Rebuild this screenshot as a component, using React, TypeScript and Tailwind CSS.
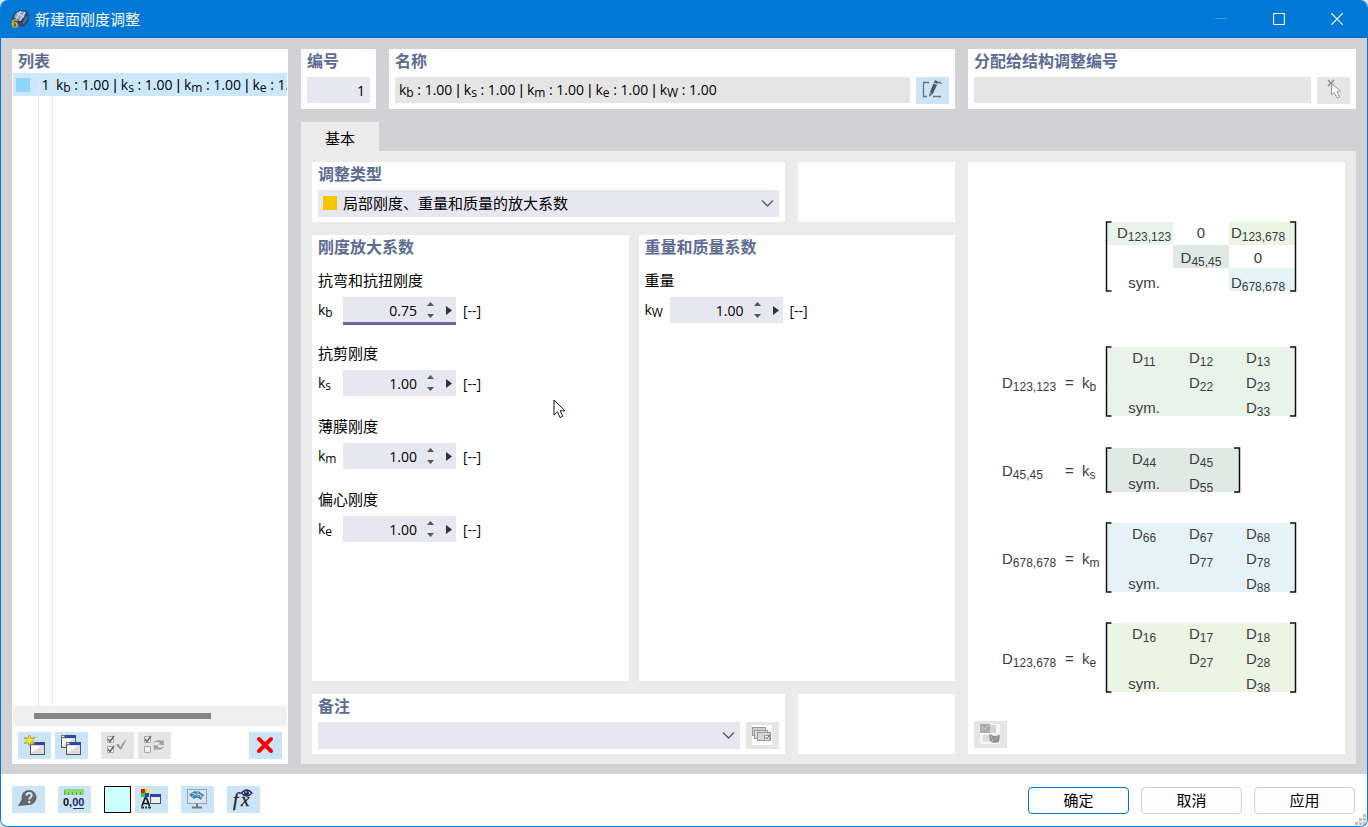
import clsx from "clsx";
import { FC, ReactNode, useState } from "react";

const Symbol: FC<{ sub: string }> = ({ sub }) => (
	<>
		k<sub className="-bottom-0.5 text-[12px]">{sub}</sub>
	</>
);

const FACTORS = ["b", "s", "m", "e", "W"];

const FactorSummary = () => (
	<>
		{FACTORS.map((sub, i) => (
			<span key={sub}>
				{i > 0 && <span className="font-['Liberation_Sans',sans-serif]"> | </span>}
				<Symbol sub={sub} /> : 1.00
			</span>
		))}
	</>
);

const Panel: FC<{
	title?: string;
	className?: string;
	children?: ReactNode;
}> = ({ title, className, children }) => (
	<section className={clsx("bg-white min-w-0", className)}>
		{title && (
			<h2 className="h-6 pl-1.5 text-[16px] leading-6 font-bold text-[#5d6b93]">
				{title}
			</h2>
		)}
		{children}
	</section>
);

const IconButton: FC<{
	label: string;
	disabled?: boolean;
	className?: string;
	children: ReactNode;
}> = ({ label, disabled, className, children }) => (
	<button
		type="button"
		aria-label={label}
		disabled={disabled}
		className={clsx(
			"flex h-[27px] w-[33px] shrink-0 items-center justify-center",
			disabled ? "bg-[#e5e5e5]" : "bg-[#cce4f7] hover:bg-[#b8daf5]",
			className
		)}
	>
		<svg className="overflow-visible" width="21" height="21" viewBox="1 1 21 21" fill="none">
			{children}
		</svg>
	</button>
);

/* ---------- icon drawings ---------- */

const AppIcon = () => (
	<svg className="overflow-visible" width="20" height="20" viewBox="0 0 20 20" fill="none">
		<path d="M2 9 Q4 3 10 1 L17 2 L19 6 L18 13 L13 18 L9 17 L4 12z" fill="#324463" />
		<path d="M4 8 Q6 3 10 2 L16 3 L14 8 L10 12 L6 10z" fill="#8fa6cf" />
		<path d="M7 4 L14 8 M11 2 L6 10 M15 3 L10 12" stroke="#dbe5f7" strokeWidth="1" />
		<path d="M15 8 L18 7 L16 13 L12 16z" fill="#56688c" />
		<text
			x="1"
			y="19"
			fontSize="13"
			fontWeight="700"
			fill="#f3bd2c"
			stroke="#5f4d20"
			strokeWidth="0.3"
			className="font-['Liberation_Sans',sans-serif]"
		>
			6
		</text>
	</svg>
);

const SmallWindow: FC<{ x: number; y: number }> = ({ x, y }) => (
	<g transform={`translate(${x} ${y})`}>
		<rect x="0.5" y="0.5" width="14" height="12" fill="#dcdcdc" stroke="#555" />
		<rect x="0" y="0" width="15" height="3" fill="#3246a8" />
		<rect x="0" y="0" width="4" height="3" fill="#777" />
		<rect x="1" y="1" width="2" height="1" fill="#dfe4ff" />
		<path d="M1 11 V4 H12z" fill="#f8f8f8" />
	</g>
);

const NewIcon = () => (
	<>
		<SmallWindow x={7} y={8} />
		<path
			d="M6.500 1 L7.800 4.500 L12 3.500 L9 6.500 L12 9.500 L7.800 8.700 L6.500 12 L5 8.700 L1 9.500 L4 6.500 L1 3.500 L5 4.500z"
			fill="#ffee22"
			stroke="#8d8615"
			strokeWidth="0.7"
		/>
	</>
);

const CopyIcon = () => (
	<>
		<SmallWindow x={1} y={1} />
		<SmallWindow x={6} y={8} />
	</>
);

const CheckAllIcon = () => (
	<>
		<path d="M1.500 2.500h6v6h-6z M1.500 12.500h6v6h-6z" fill="#f4f4f4" stroke="#aaa" />
		<path d="M2 5 L4 7.500 L8 2 M2 15 L4 17.500 L8 12" stroke="#666" strokeWidth="1.500" />
		<path d="M10 11 L12.500 9.500 L14.500 13 Q16.500 8 21 5 Q18 10 15 16z" fill="#999" />
	</>
);

const ToggleIcon = () => (
	<>
		<path d="M1.500 2.500h6v6h-6z M1.500 12.500h6v6h-6z" fill="#f0f0f0" stroke="#aaa" />
		<path d="M2 5 L4 7.500 L8 2" stroke="#666" strokeWidth="1.500" />
		<path
			d="M10 9.500 Q14 4 19 7 L20.500 5.500 L21 11 L15.500 10.500 L17 9 Q14 7 10 9.500z"
			fill="#a0a0a0"
		/>
		<path
			d="M21 12.500 Q18 17.500 13 15 L11 17 L10.500 11 L16 11.500 L14.500 13 Q18 14.500 21 12.500z"
			fill="#a0a0a0"
		/>
	</>
);

const HelpIcon = () => (
	<>
		<circle cx="12" cy="9.500" r="7.500" fill="#666" />
		<path d="M5 11 L1 18 L12 17z" fill="#666" />
		<path
			d="M9.500 7.800 Q9.500 5 12 5 Q14.700 5 14.700 7.400 Q14.700 8.800 13.200 9.600 Q12.200 10.200 12.200 11.500"
			stroke="#d6e9f8"
			strokeWidth="2"
		/>
		<circle cx="12.200" cy="14" r="1.200" fill="#d6e9f8" />
	</>
);

const DecimalsIcon = () => (
	<>
		<rect x="1" y="1" width="20" height="6" fill="#92d878" />
		<path d="M1.500 3v4 M5.500 4v3 M9.500 4v3 M13.500 4v3 M17.500 4v3" stroke="#67a552" />
		<text
			x="0"
			y="18"
			fontSize="11"
			fontWeight="700"
			fill="#111"
			className="font-['Liberation_Sans',sans-serif]"
		>
			0,<tspan fill="#1c2c66">00</tspan>
		</text>
		<path d="M10 20.500h11" stroke="#26336b" />
	</>
);

const DisplayIcon = () => (
	<>
		<path d="M1 1h4v4H1z" fill="#f00" />
		<path d="M5 1h4v4H5z" fill="#ffe600" />
		<path d="M1 5h4v4H1z" fill="#1fd81f" />
		<path d="M5 5h4v4H5z" fill="#203df0" />
		<path d="M2 18 L5 10 H6.500 L9.500 18 M3.500 15.500h4.500" stroke="#111" strokeWidth="1.600" />
		<path d="M1 19.500h3 M5 19.500h2 M8 19.500h3" stroke="#333" strokeWidth="2" />
		<rect x="10.500" y="6.500" width="10" height="9" fill="#eee" stroke="#555" />
		<rect x="10" y="6" width="11" height="3" fill="#3246a8" />
	</>
);

const ModelViewIcon = () => (
	<>
		<rect x="1.500" y="1.500" width="19" height="14" fill="#d8e6f2" stroke="#98a3ae" />
		<path d="M11 16v3 M6 19.500h10" stroke="#777" strokeWidth="2" />
		<path d="M3 7 Q8 1.500 13 3.500 L18 7 L15 12 Q11 8 8 11 Z" fill="#3f81ba" />
		<path d="M6 5 Q10 5 12.500 9 M10 3 Q13 5 16 10.500 M5.500 9 Q11 3 17 9" stroke="#a9d0ee" />
	</>
);

const FormulaIcon = () => (
	<>
		<text
			x="1"
			y="18"
			fontSize="19"
			fontStyle="italic"
			fill="#222"
			stroke="#222"
			strokeWidth="0.3"
			className="font-['Liberation_Serif',serif]"
		>
			f<tspan x="9">x</tspan>
		</text>
		<path d="M9.500 5 Q14.500 -1 20 5 Q14.500 11 9.500 5z" fill="#e8eaff" stroke="#28255f" strokeWidth="1.300" />
		<circle cx="14.500" cy="5" r="2.500" fill="#28255f" />
		<circle cx="14" cy="4" r="0.800" fill="#fff" />
	</>
);

const EditIcon = () => (
	<>
		<path d="M8 3.500H2.500v14H6 M17 3.500h3 M12 17.500h8 M20 4v1 M2.500 3v15" stroke="#707070" strokeWidth="1.300" />
		<path d="M9 13 L12.500 4.500 L16 6 L12 14.500 L8 18z" fill="#555" />
		<path d="M13 3.500 L14 1 L17 2.500 L16.500 5z" fill="#555" />
		<path d="M9 13 L8.500 16 L11 14.500z" fill="#999" />
	</>
);

const PickIcon = () => (
	<>
		<path d="M6 1 L12 7 M12 1 L6 7" stroke="#888" strokeWidth="1.300" />
		<path
			d="M9.500 4.500 L9.500 16 L12 13.500 L15 19 L17.500 18 L15 12.500 L18.500 12z"
			fill="#fff"
			stroke="#999"
		/>
	</>
);

const CommentLibraryIcon = () => (
	<>
		<rect x="1" y="1" width="20" height="20" fill="#fff" />
		<rect x="1.500" y="3.500" width="13" height="8" fill="#ccc" stroke="#999" />
		<rect x="3.500" y="6.500" width="13" height="8" fill="#ddd" stroke="#999" />
		<rect x="6.500" y="8.500" width="13" height="8" fill="#d5d5d5" stroke="#999" />
		<path d="M13.500 11.500h5v5h-5z" fill="#eee" stroke="#999" />
		<path d="M14.500 13 L16 15 L19 10" stroke="#777" />
	</>
);

const PictureIcon = () => (
	<>
		<rect x="1" y="1" width="20" height="20" fill="#f6f6f6" />
		<rect x="1" y="1" width="10" height="9" fill="#aaa" />
		<path d="M2 3 L6 6 L10 2 M2 8 L5 5 L10 9" stroke="#c8c8c8" />
		<path d="M11 2h6v8h-6z" fill="#d4d4d4" />
		<path d="M4 12h7v7H4z" fill="#dedede" />
		<path d="M10 11 L15 13 L21 12 L20 19 L15 20 L11 18z" fill="#8e8e8e" />
		<path d="M12 13 L14 18 L19 13.500" stroke="#bbb" />
	</>
);

const Chevron = () => (
	<svg
		className="pointer-events-none absolute top-2 right-[5px]"
		width="13"
		height="11"
		viewBox="0 0 13 11"
		fill="none"
	>
		<path d="M1 2.500 L6.500 8 L12 2.500" stroke="#5c5c5c" strokeWidth="1.400" />
	</svg>
);

/* ---------- factor input ---------- */

const FactorField: FC<{
	title: string;
	sub: string;
	initial: string;
	active?: boolean;
}> = ({ title, sub, initial, active }) => {
	const [value, setValue] = useState(initial);
	const step = (delta: number) => setValue((Number(value) + delta).toFixed(2));
	const id = `factor-${sub}`;

	return (
		<div className="flex flex-col gap-[7px]">
			<div className="h-5 text-[15px] leading-5">{title}</div>
			<div className="flex h-[26px] items-center text-[14px]">
				<label htmlFor={id} className="w-[25px] leading-5">
					<Symbol sub={sub} />
				</label>
				<div
					className={clsx(
						"flex h-full w-[113px] items-center bg-[#e7e7f1]",
						active && "shadow-[0_2px_0_#6764a7,inset_0_-1px_0_#6764a7]"
					)}
				>
					<input
						id={id}
						aria-label={title}
						className="h-full w-[74px] bg-transparent text-right outline-none"
						value={value}
						onChange={(e) => setValue(e.target.value)}
					/>
					<div className="ml-[10px] flex h-full w-2 flex-col justify-center gap-2">
						<button type="button" aria-label="增加" onClick={() => step(0.01)}>
							<svg width="7" height="4" viewBox="0 0 7 4">
								<path d="M3.500 0 L7 4 H0z" fill="#555" />
							</svg>
						</button>
						<button type="button" aria-label="减少" onClick={() => step(-0.01)}>
							<svg width="7" height="4" viewBox="0 0 7 4">
								<path d="M3.500 4 L7 0 H0z" fill="#555" />
							</svg>
						</button>
					</div>
					<button type="button" aria-label="更多" className="ml-[11px]">
						<svg width="6" height="9" viewBox="0 0 6 9">
							<path d="M0 0 L6 4.500 L0 9z" fill="#333" />
						</svg>
					</button>
				</div>
				<span className="ml-[7px]">[--]</span>
			</div>
		</div>
	);
};

/* ---------- stiffness matrix diagram ---------- */

const COLS = [176, 233, 290];

const Term: FC<{ x: number; y: number; base: string; sub?: string; start?: boolean }> = ({
	x,
	y,
	base,
	sub,
	start,
}) => (
	<text x={x} y={y} textAnchor={start ? "start" : "middle"} fontSize="15" fill="#3c3c3c">
		{base}
		{sub && (
			<tspan dy="3" fontSize="12">
				{sub}
			</tspan>
		)}
	</text>
);

const Brackets: FC<{ top: number; right: number; height: number }> = ({ top, right, height }) => (
	<path
		d={`M143.500 ${top}H138.500V${top + height}H143.500 M${right - 6} ${top}H${right - 0.5}V${top + height}H${right - 6}`}
		stroke="#111"
		strokeWidth="1.500"
		fill="none"
	/>
);

// rows hold the index pairs of D, "sym" marks the symmetric lower part
const BLOCKS = [
	{ name: "123,123", k: "b", top: 185, fill: "#e8f4e9", rows: [["11", "12", "13"], ["", "22", "23"], ["sym", "", "33"]] },
	{ name: "45,45", k: "s", top: 286, fill: "#e0eae5", rows: [["44", "45"], ["sym", "55"]] },
	{ name: "678,678", k: "m", top: 361, fill: "#e5f3f9", rows: [["66", "67", "68"], ["", "77", "78"], ["sym", "", "88"]] },
	{ name: "123,678", k: "e", top: 461, fill: "#eaf5e4", rows: [["16", "17", "18"], ["", "27", "28"], ["sym", "", "38"]] },
];

const MatrixDiagram = () => (
	<svg
		className="min-h-0 w-full flex-1 font-['Liberation_Sans',Arial,sans-serif]"
		viewBox="0 0 377 559"
		role="img"
		aria-label="刚度矩阵"
	>
		<rect x="139" y="60" width="66" height="23" fill="#e8f4e9" />
		<rect x="261" y="60" width="66" height="23" fill="#eaf5e4" />
		<rect x="205" y="83" width="56" height="23" fill="#e0eae5" />
		<rect x="261" y="106" width="66" height="23" fill="#e5f3f9" />
		<Brackets top={60} right={328} height={69} />
		<Term x={COLS[0]} y={76} base="D" sub="123,123" />
		<Term x={COLS[1]} y={76} base="0" />
		<Term x={COLS[2]} y={76} base="D" sub="123,678" />
		<Term x={COLS[1]} y={101} base="D" sub="45,45" />
		<Term x={COLS[2]} y={101} base="0" />
		<Term x={COLS[0]} y={126} base="sym." />
		<Term x={COLS[2]} y={126} base="D" sub="678,678" />

		{BLOCKS.map(({ name, k, top, fill, rows }) => {
			const right = rows.length === 3 ? 328 : 272;
			const height = rows.length === 3 ? 69 : 44;
			const labelY = rows.length === 3 ? top + 41 : top + 28;
			return (
				<g key={name}>
					<rect x="139" y={top} width={right - 140} height={height} fill={fill} />
					<Brackets top={top} right={right} height={height} />
					<Term x={34} y={labelY} base="D" sub={name} start />
					<Term x={97} y={labelY} base="=" start />
					<Term x={114} y={labelY} base="k" sub={k} start />
					{rows.map((row, r) =>
						row.map((cell, c) =>
							cell === "sym" ? (
								<Term key={c} x={COLS[c]} y={top + 16 + r * 25} base="sym." />
							) : (
								cell && <Term key={c} x={COLS[c]} y={top + 16 + r * 25} base="D" sub={cell} />
							)
						)
					)}
				</g>
			);
		})}
	</svg>
);

/* ---------- window parts ---------- */

const TitleBar = () => (
	<header className="flex h-[38px] shrink-0 items-center bg-[#0078d7] pr-px pl-[9px] text-white">
		<AppIcon />
		<h1 className="ml-[5px] flex-1 text-[15px]">新建面刚度调整</h1>
		<button type="button" aria-label="最小化" disabled className="flex h-full w-[58px] items-center justify-center">
			<svg width="12" height="12" viewBox="0 0 12 12">
				<path d="M0 5.500h12" stroke="#3c97e0" />
			</svg>
		</button>
		<button type="button" aria-label="最大化" className="flex h-full w-[58px] items-center justify-center">
			<svg width="12" height="12" viewBox="0 0 12 12" fill="none">
				<rect x="0.500" y="0.500" width="11" height="11" rx="1" stroke="#fff" strokeWidth="1.200" />
			</svg>
		</button>
		<button type="button" aria-label="关闭" className="flex h-full w-[58px] items-center justify-center">
			<svg width="12" height="12" viewBox="0 0 12 12">
				<path d="M0 0 L12 12 M12 0 L0 12" stroke="#fff" strokeWidth="1.200" />
			</svg>
		</button>
	</header>
);

const ListPanel = () => (
	<Panel title="列表" className="flex w-[276px] shrink-0 flex-col">
		<div className="mx-px min-h-0 flex-1 overflow-hidden">
			<table className="h-full w-full table-fixed border-separate border-spacing-0 text-[14px]">
				<colgroup>
					<col className="w-[26px]" />
					<col className="w-[14px]" />
					<col />
				</colgroup>
				<tbody>
					<tr className="h-[23px] bg-[#cce8ff]">
						<td className="border-r border-[#e5e5e5] p-0 pl-[3px]">
							<div className="h-3.5 w-3.5 bg-[#8fd6f4]" />
						</td>
						<td className="border-r border-[#e5e5e5] p-0 text-center leading-5">1</td>
						<td className="overflow-hidden p-0 pl-[3px] leading-5 whitespace-nowrap">
							<FactorSummary />
						</td>
					</tr>
					<tr>
						<td className="border-r border-[#ebebeb]" />
						<td className="border-r border-[#ebebeb]" />
						<td />
					</tr>
				</tbody>
			</table>
		</div>
		<div className="mx-px flex h-5 items-center bg-[#f0f0f0] pl-[21px]">
			<div className="h-1.5 w-[177px] bg-[#868686]" />
		</div>
		<div className="flex gap-1 px-1.5 pt-1.5 pb-[5px]">
			<IconButton label="新建">
				<NewIcon />
			</IconButton>
			<IconButton label="复制">
				<CopyIcon />
			</IconButton>
			<IconButton label="全选" disabled className="ml-[9px]">
				<CheckAllIcon />
			</IconButton>
			<IconButton label="反选" disabled>
				<ToggleIcon />
			</IconButton>
			<IconButton label="删除" className="ml-auto">
				<path d="M5 5 L17 17 M17 5 L5 17" stroke="#f00" strokeWidth="4" strokeLinecap="round" />
			</IconButton>
		</div>
	</Panel>
);

const Footer = () => (
	<footer className="relative flex h-[52px] shrink-0 items-start gap-[13px] bg-white pt-3 pr-[12px] pl-[11px]">
		<IconButton label="帮助">
			<HelpIcon />
		</IconButton>
		<IconButton label="单位和小数位">
			<DecimalsIcon />
		</IconButton>
		<div className="flex gap-1">
			<button type="button" aria-label="颜色" className="h-[27px] w-[27px] border border-black bg-[#ccffff]" />
			<IconButton label="显示属性">
				<DisplayIcon />
			</IconButton>
		</div>
		<IconButton label="模型视图">
			<ModelViewIcon />
		</IconButton>
		<IconButton label="公式">
			<FormulaIcon />
		</IconButton>
		<div className="mt-px ml-auto flex gap-3 text-[15px]">
			<button type="button" className="h-[27px] w-[101px] rounded-[4px] border border-[#0078d4] bg-[#fdfdfd]">
				确定
			</button>
			<button type="button" className="h-[27px] w-[101px] rounded-[4px] border border-[#d0d0d0] bg-[#fdfdfd]">
				取消
			</button>
			<button type="button" className="h-[27px] w-[101px] rounded-[4px] border border-[#d0d0d0] bg-[#fdfdfd]">
				应用
			</button>
		</div>
		<svg className="absolute right-0 bottom-0" width="14" height="14" viewBox="0 0 14 14">
			<path d="M10 2h3v3h-3z M6 6h3v3h-3z M10 6h3v3h-3z M2 10h3v3H2z M6 10h3v3H6z M10 10h3v3h-3z" fill="#bfbfbf" />
		</svg>
	</footer>
);

const App = () => {
	const [comment, setComment] = useState("");

	return (
		<div className="h-screen min-h-[640px] bg-[#dfe5ea] font-['Open_Sans','Noto_Sans_CJK_SC',sans-serif] text-black">
			<div className="flex h-full flex-col overflow-hidden rounded-lg border border-t-0 border-[#0078d4]">
				<TitleBar />
				<main className="flex min-h-0 flex-1 gap-[13px] bg-[#d2d1d6] px-[11px] pt-[11px] pb-[10px]">
					<ListPanel />
					<div className="flex min-w-0 flex-1 flex-col">
						<div className="grid h-[60px] shrink-0 grid-cols-[75fr_566fr_388fr] gap-[13px]">
							<Panel title="编号">
								<input
									aria-label="编号"
									className="mt-1 ml-1.5 block h-[26px] w-[calc(100%-12px)] bg-[#e7e7f1] pr-[5px] text-right text-[14px]"
									defaultValue="1"
								/>
							</Panel>
							<Panel title="名称">
								<div className="mt-1 flex gap-1.5 px-1.5">
									<output
										aria-label="名称"
										className="h-[26px] min-w-0 flex-1 overflow-hidden bg-[#e5e5e5] pl-1 text-[14px] leading-[26px] whitespace-nowrap"
									>
										<FactorSummary />
									</output>
									<IconButton label="编辑名称">
										<EditIcon />
									</IconButton>
								</div>
							</Panel>
							<Panel title="分配给结构调整编号">
								<div className="mt-1 flex gap-1.5 px-1.5">
									<input
										aria-label="分配给结构调整编号"
										disabled
										className="h-[26px] min-w-0 flex-1 bg-[#e5e5e5] px-1 text-[14px]"
									/>
									<IconButton label="选择" disabled>
										<PickIcon />
									</IconButton>
								</div>
							</Panel>
						</div>

						<div role="tablist" className="mt-[13px] flex shrink-0">
							<button
								type="button"
								role="tab"
								aria-selected="true"
								className="h-[29px] w-[78px] bg-[#ebebeb] pt-1 text-[15px]"
							>
								基本
							</button>
						</div>

						<div
							role="tabpanel"
							className="grid min-h-0 flex-1 grid-cols-[643fr_377fr] gap-[13px] bg-[#ebebeb] px-[11px] pt-[11px] pb-[10px]"
						>
							<div className="flex min-h-0 min-w-0 flex-col gap-[13px]">
								<div className="grid h-[60px] shrink-0 grid-cols-[473fr_157fr] gap-[13px]">
									<Panel title="调整类型">
										<div className="relative mx-1.5 mt-1">
											<span className="absolute top-1.5 left-[5px] h-3.5 w-3.5 bg-[#f7c500]" />
											<select
												aria-label="调整类型"
												className="h-[27px] w-full appearance-none bg-[#e7e7f1] pl-[25px] text-[15px]"
											>
												<option>局部刚度、重量和质量的放大系数</option>
											</select>
											<Chevron />
										</div>
									</Panel>
									<Panel />
								</div>

								<div className="grid min-h-0 flex-1 grid-cols-2 gap-[10px]">
									<Panel title="刚度放大系数" className="relative">
										<div className="mt-[11px] flex flex-col gap-5 pl-1.5">
											<FactorField title="抗弯和抗扭刚度" sub="b" initial="0.75" active />
											<FactorField title="抗剪刚度" sub="s" initial="1.00" />
											<FactorField title="薄膜刚度" sub="m" initial="1.00" />
											<FactorField title="偏心刚度" sub="e" initial="1.00" />
										</div>
										{/* mouse pointer */}
										<svg
											className="pointer-events-none absolute top-[164px] left-[241px]"
											width="13"
											height="20"
											viewBox="0 0 13 20"
										>
											<path
												d="M1 1 V16 L4.500 12.700 L7 18.500 L9.700 17.300 L7.200 11.800 H12z"
												fill="#fff"
												stroke="#111827"
											/>
										</svg>
									</Panel>
									<Panel title="重量和质量系数">
										<div className="mt-[11px] pl-1.5">
											<FactorField title="重量" sub="W" initial="1.00" />
										</div>
									</Panel>
								</div>

								<div className="grid h-[60px] shrink-0 grid-cols-[473fr_157fr] gap-[13px]">
									<Panel title="备注">
										<div className="mt-1 flex gap-1.5 px-1.5">
											<div className="relative min-w-0 flex-1">
												<select
													aria-label="备注"
													className="h-[27px] w-full appearance-none bg-[#e7e7f1] px-1 text-[15px]"
													value={comment}
													onChange={(e) => setComment(e.target.value)}
												>
													<option value="" />
												</select>
												<Chevron />
											</div>
											<IconButton label="备注库" disabled>
												<CommentLibraryIcon />
											</IconButton>
										</div>
									</Panel>
									<Panel />
								</div>
							</div>

							<Panel className="flex min-h-0 flex-col">
								<MatrixDiagram />
								<div className="px-1.5 pb-1.5">
									<IconButton label="图片" disabled>
										<PictureIcon />
									</IconButton>
								</div>
							</Panel>
						</div>
					</div>
				</main>
				<Footer />
			</div>
		</div>
	);
};

export default App;
